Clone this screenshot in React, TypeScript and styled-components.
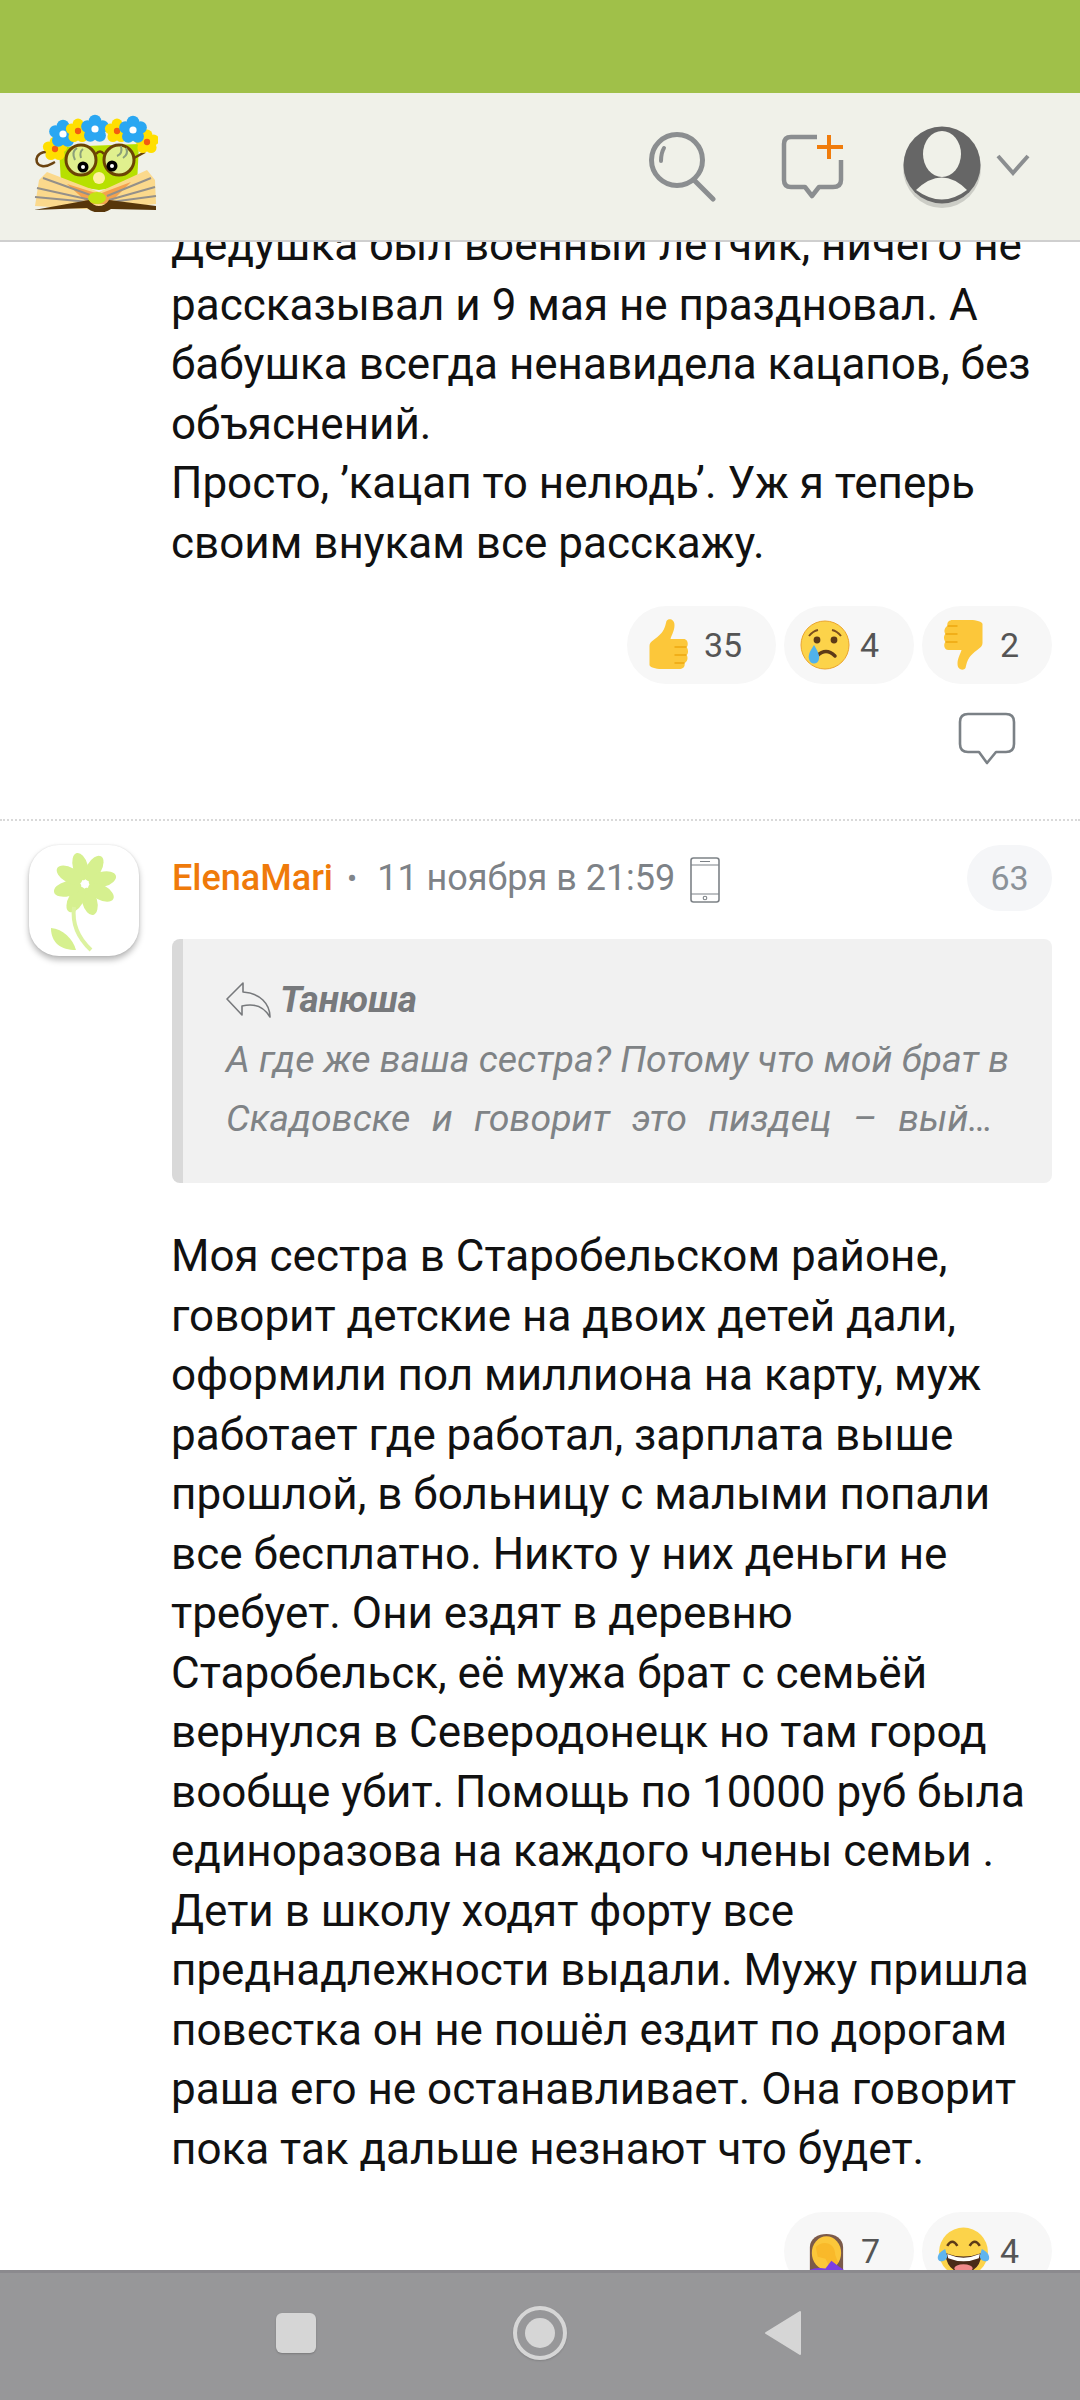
import React from "react";
import styled, { createGlobalStyle } from "styled-components";

const Global = createGlobalStyle`
  html, body { margin: 0; padding: 0; background: #fff; }
  * { box-sizing: border-box; }
`;

const Page = styled.div`
  width: 1080px; height: 2400px; display: flex; flex-direction: column; overflow: hidden;
  font-family: Roboto, "Liberation Sans", sans-serif; background: #fff;
`;
const StatusBar = styled.div`height: 93px; flex: none; background: #a0c049;`;
const Header = styled.header`
  height: 149px; flex: none; display: flex; align-items: center; position: relative; z-index: 2;
  background: #f0f1e9; border-bottom: 2px solid #cfcfcf; padding: 0 50px 0 32px;
`;
const LogoWrap = styled.div`flex: 1; display: flex; align-items: center; margin-top: -8px;`;
const HeaderIcons = styled.div`display: flex; align-items: center;`;
const SearchSvg = styled.svg`width: 68px; height: 70px; margin-right: 64px; display: block;`;
const NewSvg = styled.svg`width: 66px; height: 66px; margin-right: 54px; display: block;`;
const AvatarSvg = styled.svg`width: 82px; height: 84px; margin-right: 13px; display: block; margin-top: 0;`;
const ChevronSvg = styled.svg`width: 34px; height: 22px; display: block; margin-top: -3px;`;

const Main = styled.main`flex: 1; min-height: 0; overflow: hidden; position: relative;`;
const Feed = styled.div`margin-top: -26px;`;
const Body = styled.p`
  margin: 0; font-size: 44px; line-height: 59.5px; color: #111; white-space: pre-line;
`;
const TopBody = styled(Body)`padding-left: 171px;`;
const Pills = styled.div`display: flex; justify-content: flex-end; gap: 8px; margin-top: 33px;`;
const TopPills = styled(Pills)`padding-right: 28px;`;
const Pill = styled.div<{ $lead: number; $gap: number; $width: number }>`
  height: 78px; width: ${(p) => p.$width}px; border-radius: 39px; background: #f7f7f7; display: flex; align-items: center;
  gap: ${(p) => p.$gap}px; padding-left: ${(p) => p.$lead}px; font-size: 34px; color: #555;
`;
const EmojiSvg = styled.svg<{ $w: number }>`width: ${(p) => p.$w}px; height: 52px; display: block; flex: none;`;
const ReplyRow = styled.div`display: flex; justify-content: flex-end; padding-right: 64px; margin-top: 28px;`;
const ReplySvg = styled.svg`width: 58px; height: 54px; display: block;`;
const Divider = styled.div`margin-top: 53px; border-top: 2px dotted #d9d9d9;`;
const Comment = styled.article`display: flex; padding: 24px 28px 0 29px; gap: 33px;`;
const Avatar = styled.div`
  flex: none; width: 110px; height: 111px; border-radius: 30px; background: #fff;
  box-shadow: 0 4px 6px rgba(0,0,0,.28), 0 0 2px rgba(0,0,0,.12); display: flex; align-items: center; justify-content: center;
`;
const AvatarFlower = styled.svg`width: 110px; height: 111px; display: block;`;
const Column = styled.div`flex: 1; min-width: 0;`;
const Meta = styled.div`display: flex; align-items: center; height: 66px;`;
const Name = styled.span`font-size: 36px; font-weight: 500; color: #ef7a0a;`;
const Dot = styled.span`font-size: 30px; color: #80858a; margin: 0 20px 0 14px;`;
const Time = styled.span`font-size: 36px; color: #7d8287;`;
const Phone = styled.svg`width: 30px; height: 46px; margin-left: 15px; margin-top: 4px; display: block;`;
const Badge = styled.div`
  margin-left: auto; width: 85px; height: 66px; border-radius: 33px; background: #f5f6f8;
  display: flex; align-items: center; justify-content: center; font-size: 34px; color: #8b9299;
`;
const Quote = styled.blockquote`
  margin: 28px 0 0; height: 244px; padding: 31px 44px 0 43px; background: #f1f1f1;
  border-left: 11px solid #d9d9d9; border-radius: 8px;
  font-size: 37.5px; line-height: 59.5px; font-style: italic; color: #7f8386;
`;
const QuoteTitle = styled.div`display: flex; align-items: center; gap: 8px; font-weight: 700; font-size: 37px; color: #77797c;`;
const QuoteArrow = styled.svg`width: 46px; height: 36px; display: block; flex: none;`;
const QuoteLine = styled.div`white-space: nowrap;`;
const QuoteLastLine = styled(QuoteLine)`white-space: normal; text-align: justify; text-align-last: justify; padding-right: 15px;`;
const MainBody = styled(Body)`margin: 44px 0 0 -1px;`;

const Nav = styled.nav`
  height: 130px; flex: none; position: relative; z-index: 2; background: #979799; border-top: 3px solid #8b8a8e;
  display: flex; align-items: center; padding: 0 278px 8px 276px; justify-content: space-between;
`;
const NavSquare = styled.div`width: 40px; height: 40px; border-radius: 6px; background: #d6d6d6; box-shadow: 0 1px 2px rgba(0,0,0,.2);`;
const NavRing = styled.div`
  width: 54px; height: 54px; border-radius: 50%; border: 4px solid #d6d6d6; display: flex; align-items: center; justify-content: center;
  box-shadow: 0 1px 2px rgba(0,0,0,.15);
`;
const NavDot = styled.div`width: 30px; height: 30px; border-radius: 50%; background: #d6d6d6;`;
const NavBack = styled.svg`width: 38px; height: 48px; display: block;`;

const Flower = ({ x, y, r, c, d }: { x: number; y: number; r: number; c: string; d: string }) => (
  <g>
    {[0, 72, 144, 216, 288].map((a) => (
      <circle key={a} cx={x + r * Math.sin((a * Math.PI) / 180)} cy={y - r * Math.cos((a * Math.PI) / 180)} r={r * 0.78} fill={c} />
    ))}
    <circle cx={x} cy={y} r={r * 0.45} fill={d} />
  </g>
);

const Logo = () => (
  <svg width="126" height="98" viewBox="33 42 126 98" style={{ display: "block" }}>
    <path d="M55 82 C38 74 32 92 43 94 C49 95 52 92 56 90" fill="none" stroke="#6b4310" strokeWidth="2.5" />
    <path d="M60 75 L140 72 L138 112 L100 118 L62 112 Z" fill="#b7e000" />
    <path d="M40 108 L48 100 L100 120 L148 98 L156 108 L157 132 L100 138 L36 134 Z" fill="#fbd98c" />
    <path d="M68 112 L100 122 L132 110 L110 132 L90 132 Z" fill="#f4a24e" />
    <path d="M44 106 L94 124 M38 116 L92 128 M36 125 L90 130 M152 106 L108 124 M156 115 L110 128 M157 124 L112 130" stroke="#94908a" strokeWidth="2" fill="none" />
    <path d="M35 138 L90 128 C95 136 105 136 110 128 L157 134 L157 138 L112 137 C105 142 95 142 88 136 Z" fill="#57360a" />
    <ellipse cx="98" cy="126" rx="9" ry="6" fill="#c4e314" />
    <ellipse cx="100" cy="106" rx="6" ry="6" fill="#fff0a0" />
    <circle cx="82" cy="88" r="15" fill="#e0f08e" stroke="#6b4405" strokeWidth="3" />
    <circle cx="120" cy="88" r="15" fill="#e0f08e" stroke="#6b4405" strokeWidth="3" />
    <path d="M97 82 Q101 77 105 82 M135 86 L146 80" stroke="#6b4405" strokeWidth="2.5" fill="none" />
    <path d="M76 88 Q72 80 78 76 M82 86 Q80 80 84 77 M118 84 Q124 82 122 74 M124 86 Q130 82 127 76" stroke="#8ba07a" strokeWidth="2" fill="none" />
    <circle cx="84" cy="95" r="5.5" fill="#000" /><circle cx="84" cy="95" r="2" fill="#fff" />
    <circle cx="113" cy="94" r="5.5" fill="#000" /><circle cx="113" cy="94" r="2" fill="#fff" />
    <Flower x={56} y={77} r={7} c="#ffdf00" d="#f35c10" />
    <Flower x={148} y={70} r={7} c="#ffdf00" d="#f35c10" />
    <Flower x={64} y={62} r={8} c="#2aa7f2" d="#fff" />
    <Flower x={79} y={59} r={7} c="#ffdf00" d="#f35c10" />
    <Flower x={96} y={57} r={8} c="#2aa7f2" d="#fff" />
    <Flower x={118} y={59} r={7} c="#ffdf00" d="#f35c10" />
    <Flower x={134} y={58} r={8} c="#2aa7f2" d="#fff" />
  </svg>
);

const ThumbPath = "M8 27 C8 22 14 21 20 14 C24 9 24 5 25 2 C27 -1 33 0 33 6 C33 12 30 16 29 20 L42 20 C47 20 47 27 45 28 C47 30 47 35 45 36 C47 38 46 43 43 44 C44 48 41 50 38 50 L20 50 C14 50 8 48 8 46 Z";
const ThumbLines = "M33 28 L45 28 M33 36 L45 36 M33 44 L43 44";

const Up = () => (
  <EmojiSvg $w={47} viewBox="6 0 42 52">
    <path d={ThumbPath} fill="#fcc73a" />
    <path d={ThumbLines} stroke="#eda80f" strokeWidth="1.5" fill="none" />
  </EmojiSvg>
);
const Down = () => (
  <EmojiSvg $w={47} viewBox="4 0 42 52">
    <g transform="translate(52 51) rotate(180)">
      <path d={ThumbPath} fill="#fcc73a" />
      <path d={ThumbLines} stroke="#eda80f" strokeWidth="1.5" fill="none" />
    </g>
  </EmojiSvg>
);
const Cry = () => (
  <EmojiSvg $w={50} viewBox="0 0 50 52">
    <circle cx="25" cy="26" r="24" fill="#fcd34a" stroke="#eba52e" strokeWidth="1" />
    <path d="M9 17 Q13 12 18 11 M32 11 Q37 12 41 17" stroke="#7a4e1f" strokeWidth="2" fill="none" />
    <circle cx="17" cy="21" r="3.4" fill="#5d3a17" /><circle cx="34" cy="21" r="3.4" fill="#5d3a17" />
    <path d="M17 37 Q26 28 35 37" stroke="#5d3a17" strokeWidth="3.5" fill="none" strokeLinecap="round" />
    <path d="M14 26 C10 32 8 36 9 40 C10 46 18 46 19 40 C20 36 17 31 14 26 Z" fill="#50b2ec" />
  </EmojiSvg>
);
const Facepalm = () => (
  <EmojiSvg $w={43} viewBox="2 0 44 52">
    <path d="M8 22 C8 4 42 4 42 22 L42 46 L8 46 Z" fill="#7b5a4a" />
    <ellipse cx="25" cy="28" rx="15" ry="17" fill="#fcc73a" />
    <path d="M14 22 C22 14 34 18 34 30 L37 38 L28 42 L24 34 L16 32 Z" fill="#f9b92a" />
    <path d="M2 52 C4 44 16 42 24 44 L30 36 L38 42 C42 44 46 48 46 52 Z" fill="#7b3fe4" />
  </EmojiSvg>
);
const Laugh = () => (
  <EmojiSvg $w={53} viewBox="0 0 52 50">
    <circle cx="26" cy="26" r="24" fill="#fcd34a" />
    <path d="M10 20 Q15 12 20 20 M32 20 Q37 12 42 20" stroke="#5d3a17" strokeWidth="2.5" fill="none" />
    <path d="M8 27 Q26 34 44 27 Q42 46 26 46 Q10 46 8 27 Z" fill="#4a2a18" />
    <path d="M10 28 Q26 35 42 28 L41 32 Q26 38 11 32 Z" fill="#fff" />
    <ellipse cx="26" cy="42" rx="9" ry="4" fill="#f08a8a" />
    <path d="M8 23 C2 26 0 30 1 33 C3 37 10 35 10 30 Z M44 23 C50 26 52 30 51 33 C49 37 42 35 42 30 Z" fill="#5fb4ee" />
  </EmojiSvg>
);

const petalAngles = [-15, 30, 75, 118, 165, 210, 255, 300];

export default function App() {
  return (
    <Page>
      <Global />
      <StatusBar />
      <Header>
        <LogoWrap><Logo /></LogoWrap>
        <HeaderIcons>
          <SearchSvg viewBox="0 0 68 70">
            <circle cx="28" cy="28" r="25.5" fill="none" stroke="#8b8e90" strokeWidth="5" />
            <path d="M46 49 L64 67" stroke="#8b8e90" strokeWidth="5" strokeLinecap="round" />
            <path d="M12 29 Q12 21 15 16" stroke="#8b8e90" strokeWidth="4" fill="none" strokeLinecap="round" />
          </SearchSvg>
          <NewSvg viewBox="0 0 66 66">
            <path d="M36 3 L10 3 Q3 3 3 10 L3 46 Q3 53 10 53 L24 53 L31 62 L38 53 L52 53 Q60 53 60 46 L60 26" fill="none" stroke="#8b8e90" strokeWidth="4.5" strokeLinejoin="round" />
            <path d="M48 1 L48 25 M36 13 L62 13" stroke="#f07c0c" strokeWidth="4" fill="none" />
          </NewSvg>
          <AvatarSvg viewBox="0 0 82 84">
            <ellipse cx="41" cy="43" rx="39" ry="40" fill="#000" opacity=".15" />
            <circle cx="41" cy="40" r="38.5" fill="#666" />
            <ellipse cx="41" cy="29" rx="19" ry="23" fill="#f0f1e9" />
            <path d="M15 65 Q41 40 66 65 Q41 84 15 65 Z" fill="#f0f1e9" />
          </AvatarSvg>
          <ChevronSvg viewBox="0 0 34 22">
            <path d="M2 2 L17 19 L32 2" fill="none" stroke="#8b8e90" strokeWidth="4" />
          </ChevronSvg>
        </HeaderIcons>
      </Header>
      <Main>
        <Feed>
          <TopBody>{`Дедушка был военный летчик, ничего не
рассказывал и 9 мая не праздновал. А
бабушка всегда ненавидела кацапов, без
объяснений.
Просто, ’кацап то нелюдь’. Уж я теперь
своим внукам все расскажу.`}</TopBody>
          <TopPills>
            <Pill $width={149} $lead={18} $gap={12}><Up />35</Pill>
            <Pill $width={130} $lead={16} $gap={10}><Cry />4</Pill>
            <Pill $width={130} $lead={18} $gap={13}><Down />2</Pill>
          </TopPills>
          <ReplyRow>
            <ReplySvg viewBox="0 0 58 54">
              <path d="M10 2 L48 2 Q56 2 56 10 L56 32 Q56 40 48 40 L38 40 L29 51 L21 40 L10 40 Q2 40 2 32 L2 10 Q2 2 10 2 Z" fill="none" stroke="#7b8186" strokeWidth="2.6" strokeLinejoin="round" />
            </ReplySvg>
          </ReplyRow>
          <Divider />
          <Comment>
            <Avatar>
              <AvatarFlower viewBox="0 0 110 111">
                {petalAngles.map((a) => (
                  <ellipse key={a} cx="56" cy="21" rx="7.5" ry="14" fill="#d6f08f" transform={`rotate(${a} 56 39)`} />
                ))}
                <path d="M45 62 C43 78 48 92 62 105" fill="none" stroke="#dcf2a0" strokeWidth="4" />
                <path d="M22 83 C34 84 44 94 47 105 C32 105 22 98 22 83 Z" fill="#d6f08f" />
              </AvatarFlower>
            </Avatar>
            <Column>
              <Meta>
                <Name>ElenaMari</Name>
                <Dot>•</Dot>
                <Time>11 ноября в 21:59</Time>
                <Phone viewBox="0 0 30 46">
                  <rect x="1" y="1" width="28" height="44" rx="2.5" fill="none" stroke="#7d8287" strokeWidth="1.6" />
                  <path d="M1 8 L29 8 M1 37 L29 37 M10 4.5 L20 4.5" stroke="#7d8287" strokeWidth="1.2" />
                  <circle cx="15" cy="41" r="1.8" fill="none" stroke="#7d8287" strokeWidth="1.1" />
                </Phone>
                <Badge>63</Badge>
              </Meta>
              <Quote>
                <QuoteTitle>
                  <QuoteArrow viewBox="0 0 46 36">
                    <path d="M17 1 L1 17 L16 33 L16 24 C28 21 38 25 44 35 C44 22 34 11 17 10 Z" fill="none" stroke="#77797c" strokeWidth="1.6" strokeLinejoin="round" />
                  </QuoteArrow>
                  Танюша
                </QuoteTitle>
                <QuoteLine>А где же ваша сестра? Потому что мой брат в</QuoteLine>
                <QuoteLastLine>Скадовске и говорит это пиздец – вый…</QuoteLastLine>
              </Quote>
              <MainBody>{`Моя сестра в Старобельском районе,
говорит детские на двоих детей дали,
оформили пол миллиона на карту, муж
работает где работал, зарплата выше
прошлой, в больницу с малыми попали
все бесплатно. Никто у них деньги не
требует. Они ездят в деревню
Старобельск, её мужа брат с семьёй
вернулся в Северодонецк но там город
вообще убит. Помощь по 10000 руб была
единоразова на каждого члены семьи .
Дети в школу ходят форту все
преднадлежности выдали. Мужу пришла
повестка он не пошёл ездит по дорогам
раша его не останавливает. Она говорит
пока так дальше незнают что будет.`}</MainBody>
              <Pills>
                <Pill $width={130} $lead={20} $gap={14}><Facepalm />7</Pill>
                <Pill $width={130} $lead={15} $gap={10}><Laugh />4</Pill>
              </Pills>
            </Column>
          </Comment>
        </Feed>
      </Main>
      <Nav>
        <NavSquare />
        <NavRing><NavDot /></NavRing>
        <NavBack viewBox="0 0 38 48">
          <path d="M36 3 L36 45 L2 24 Z" fill="#d6d6d6" stroke="#d6d6d6" strokeWidth="2" strokeLinejoin="round" />
        </NavBack>
      </Nav>
    </Page>
  );
}
